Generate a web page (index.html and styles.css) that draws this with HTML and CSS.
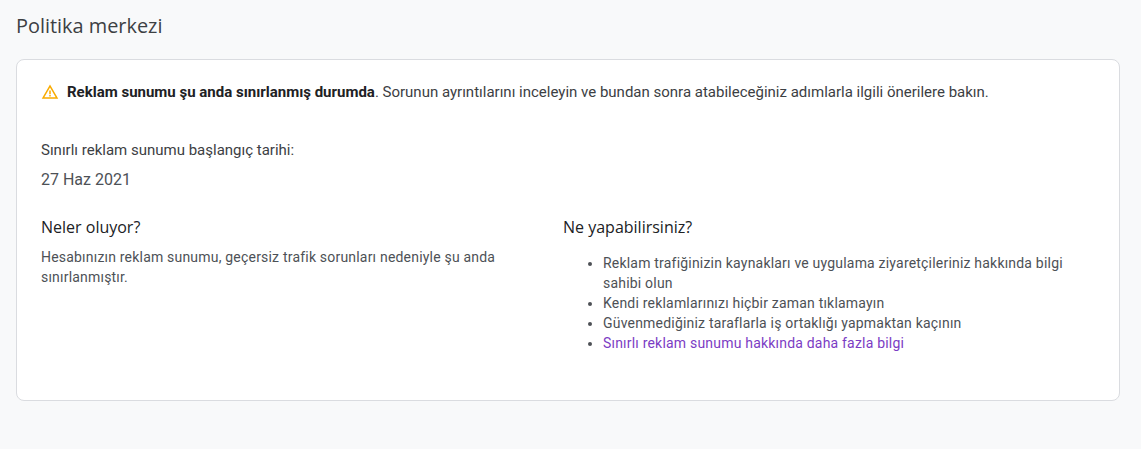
FILE: index.html
```html
<!DOCTYPE html>
<html lang="tr">
<head>
<meta charset="utf-8">
<title>Politika merkezi</title>
<link rel="stylesheet" href="styles.css">
</head>
<body>
<main class="page">
  <h1 class="title">Politika merkezi</h1>
  <section class="card">
    <div class="alert">
      <svg class="alert-icon" viewBox="0 0 24 24" width="18" height="18" aria-hidden="true"><path fill="#f9ab00" d="M12 5.99 19.53 19H4.47L12 5.99M12 2 1 21h22L12 2z"/><path fill="#f9ab00" d="M13 16h-2v2h2zM13 10h-2v5h2z"/></svg>
      <p class="alert-text"><strong>Reklam sunumu şu anda sınırlanmış durumda</strong>. Sorunun ayrıntılarını inceleyin ve bundan sonra atabileceğiniz adımlarla ilgili önerilere bakın.</p>
    </div>
    <div class="date-block">
      <div class="date-label">Sınırlı reklam sunumu başlangıç tarihi:</div>
      <div class="date-value">27 Haz 2021</div>
    </div>
    <div class="columns">
      <div class="column">
        <h2 class="heading">Neler oluyor?</h2>
        <p class="body-text">Hesabınızın reklam sunumu, geçersiz trafik sorunları nedeniyle şu anda sınırlanmıştır.</p>
      </div>
      <div class="column">
        <h2 class="heading">Ne yapabilirsiniz?</h2>
        <ul class="tips">
          <li>Reklam trafiğinizin kaynakları ve uygulama ziyaretçileriniz hakkında bilgi sahibi olun</li>
          <li>Kendi reklamlarınızı hiçbir zaman tıklamayın</li>
          <li>Güvenmediğiniz taraflarla iş ortaklığı yapmaktan kaçının</li>
          <li><a class="link" href="#">Sınırlı reklam sunumu hakkında daha fazla bilgi</a></li>
        </ul>
      </div>
    </div>
  </section>
</main>
</body>
</html>
```
FILE: styles.css
```css
* { box-sizing: border-box; }
html, body { margin: 0; height: 100%; }
body {
  background: #f8f9fa;
  color: #3c4043;
  font-family: Roboto, "Liberation Sans", sans-serif;
  font-size: 14px;
  line-height: 20px;
  overflow: hidden;
}
.page { padding: 12px 21px 0 16px; }
.title {
  margin: 0 0 19px;
  font-family: "Open Sans", Roboto, sans-serif;
  font-size: 19.9px;
  font-weight: 400;
  line-height: 28px;
  color: #3c4043;
}
.card {
  height: 342px;
  padding: 22px 24px 0;
  background: #fff;
  border: 1px solid #dadce0;
  border-radius: 8px;
}
.alert { display: flex; align-items: center; gap: 8px; height: 20px; font-size: 15px; }
.alert-icon { flex: none; }
.alert-text { margin: 0; }
.alert-text strong { font-weight: 700; color: #202124; }
.date-block { margin-top: 38px; font-size: 15px; }
.date-label { color: #3c4043; }
.date-value { margin-top: 10px; font-size: 16px; line-height: 20px; color: #4d5156; }
.columns { display: grid; grid-template-columns: 522px 1fr; margin-top: 27px; letter-spacing: 0.2px; }
.heading {
  margin: 0;
  font-family: "Open Sans", Roboto, sans-serif;
  font-size: 16px;
  font-weight: 400;
  letter-spacing: 0;
  line-height: 20px;
  color: #202124;
}
.body-text { margin: 10px 0 0; max-width: 470px; color: #4d5156; }
.tips { margin: 16px 0 0; padding: 0 0 0 40px; color: #4d5156; }
.link { color: #7b3cc4; text-decoration: none; }
```
